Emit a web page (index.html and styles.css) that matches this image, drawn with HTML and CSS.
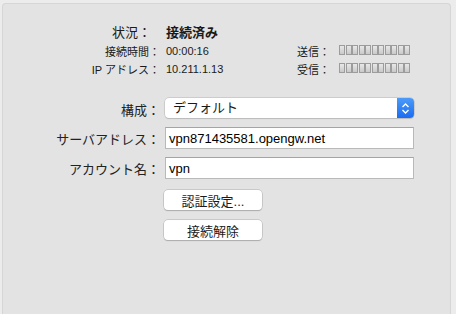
FILE: index.html
```html
<!DOCTYPE html>
<html>
<head>
  <link rel="stylesheet" href="styles.css">
</head>
<body>
  <div class="panel">
    <div class="status">
      <div class="label main">状況：</div>
      <div class="value main bold">接続済み</div>
      <div></div>
      <div></div>

      <div class="label">接続時間：</div>
      <div class="value">00:00:16</div>
      <div class="side-label">送信：</div>
      <div class="meter">
        <span></span><span></span><span></span><span></span><span></span><span></span>
        <span></span><span></span><span></span><span></span><span></span>
      </div>

      <div class="label">IP アドレス：</div>
      <div class="value">10.211.1.13</div>
      <div class="side-label">受信：</div>
      <div class="meter">
        <span></span><span></span><span></span><span></span><span></span><span></span>
        <span></span><span></span><span></span><span></span><span></span>
      </div>
    </div>

    <div class="form">
      <div class="form-label">構成：</div>
      <div class="popup">
        <span class="popup-text">デフォルト</span>
        <span class="stepper">
          <svg width="9" height="13" viewBox="0 0 9 13">
            <path d="M1.5 5 L4.5 2 L7.5 5" fill="none" stroke="#fff" stroke-width="1.4"/>
            <path d="M1.5 8 L4.5 11 L7.5 8" fill="none" stroke="#fff" stroke-width="1.4"/>
          </svg>
        </span>
      </div>

      <div class="form-label">サーバアドレス：</div>
      <div class="field">vpn871435581.opengw.net</div>

      <div class="form-label">アカウント名：</div>
      <div class="field">vpn</div>

      <div></div>
      <div class="buttons">
        <button class="button">認証設定...</button>
        <button class="button">接続解除</button>
      </div>
    </div>
  </div>
</body>
</html>
```

FILE: styles.css
```css
body {
  margin: 0;
  background: #ECECEC;
  font-family: "Liberation Sans", "Noto Sans CJK JP", sans-serif;
  color: #1A1A1A;
}

.panel {
  margin: 3px 5px 0 2px;
  height: 311px;
  background: #E3E3E3;
  border: 1px solid #D6D6D6;
  border-bottom: none;
  border-radius: 4px 4px 0 0;
  box-sizing: border-box;
}

.status {
  display: grid;
  grid-template-columns: 162px 132px 42px 1fr;
  grid-template-rows: 22px 18px 18px;
  padding-top: 16px;
  font-size: 11px;
  align-items: center;
}

.label {
  text-align: right;
  padding-right: 5px;
}

.label.main {
  padding-right: 14px;
}

.main {
  font-size: 13px;
}

.bold {
  font-weight: bold;
}

.value {
  padding-left: 1px;
}

.meter {
  display: flex;
  gap: 0.5px;
  margin-top: -3px;
}

.meter span {
  width: 6px;
  height: 10px;
  box-sizing: border-box;
  border: 1px solid #9C9C9C;
  background: linear-gradient(#E8E8E8, #C9C9C9);
}

.form {
  display: grid;
  grid-template-columns: 162px 249px;
  grid-template-rows: 20px 22px 22px auto;
  row-gap: 8px;
  margin-top: 21px;
  font-size: 13px;
  align-items: center;
}

.form-label {
  text-align: right;
  padding-right: 5px;
  color: #222222;
}

.popup {
  display: flex;
  height: 20px;
  margin-bottom: 2px;
  background: #FFFFFF;
  border-radius: 4px;
  box-shadow: 0 0 0 0.5px #B5B5B5, 0 1px 1px rgba(0, 0, 0, 0.15);
  overflow: hidden;
}

.popup-text {
  flex: 1;
  padding-left: 8px;
  line-height: 20px;
}

.stepper {
  width: 17px;
  display: flex;
  align-items: center;
  justify-content: center;
  background: linear-gradient(#4B9BFA, #1B6CF2);
}

.field {
  height: 22px;
  line-height: 21px;
  padding-left: 3px;
  box-sizing: border-box;
  background: #FFFFFF;
  border: 1px solid #B9B9B9;
  border-top-color: #A4A4A4;
  color: #000000;
}

.buttons {
  display: flex;
  flex-direction: column;
  gap: 10px;
  margin-top: 3px;
  margin-left: -1px;
}

.button {
  width: 98px;
  height: 20px;
  padding: 0;
  font-family: "Liberation Sans", "Noto Sans CJK JP", sans-serif;
  font-size: 13px;
  color: #1A1A1A;
  background: #FFFFFF;
  border: none;
  border-radius: 4px;
  box-shadow: 0 0 0 0.5px #B0B0B0, 0 1px 1px rgba(0, 0, 0, 0.25);
}
```
